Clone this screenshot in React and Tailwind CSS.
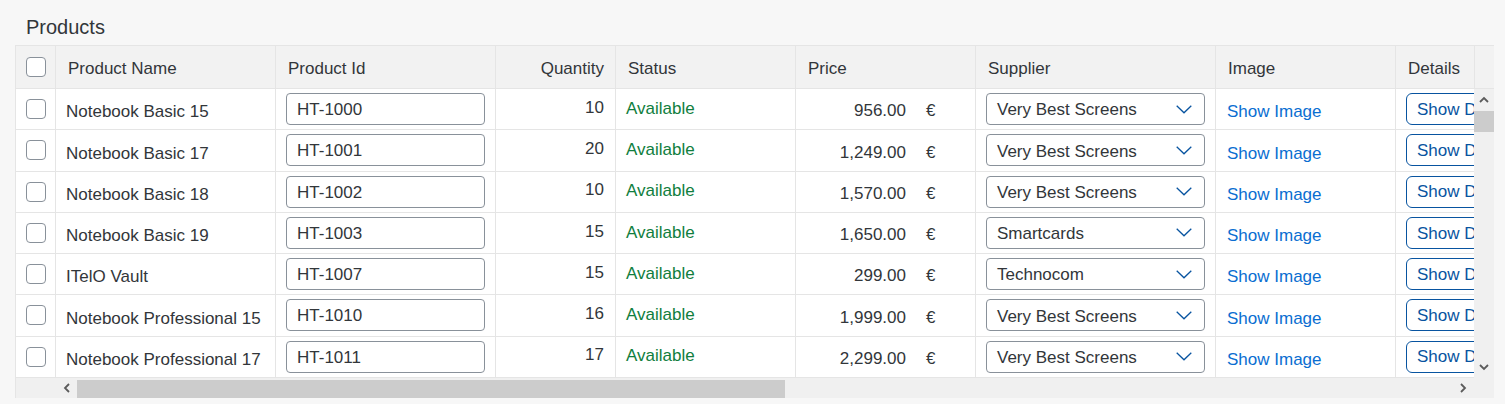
import { useState } from 'react';

const PRODUCTS = [
  { name: 'Notebook Basic 15', id: 'HT-1000', qty: 10, price: '956.00', supplier: 'Very Best Screens' },
  { name: 'Notebook Basic 17', id: 'HT-1001', qty: 20, price: '1,249.00', supplier: 'Very Best Screens' },
  { name: 'Notebook Basic 18', id: 'HT-1002', qty: 10, price: '1,570.00', supplier: 'Very Best Screens' },
  { name: 'Notebook Basic 19', id: 'HT-1003', qty: 15, price: '1,650.00', supplier: 'Smartcards' },
  { name: 'ITelO Vault', id: 'HT-1007', qty: 15, price: '299.00', supplier: 'Technocom' },
  { name: 'Notebook Professional 15', id: 'HT-1010', qty: 16, price: '1,999.00', supplier: 'Very Best Screens' },
  { name: 'Notebook Professional 17', id: 'HT-1011', qty: 17, price: '2,299.00', supplier: 'Very Best Screens' },
];

const cell = 'shrink-0 border-r border-b border-[#e5e5e5] flex items-center';
const head = `${cell} pl-[12px] pt-[4px]`;

function Checkbox({ checked, onChange }) {
  return (
    <button
      onClick={onChange}
      className="w-[20px] h-[20px] border border-[#89919a] rounded-[4px] bg-white flex items-center justify-center"
    >
      {checked && (
        <svg width="12" height="10" viewBox="0 0 12 10">
          <polyline points="1,5 4.5,8.5 11,1" fill="none" stroke="#0854a0" strokeWidth="2" />
        </svg>
      )}
    </button>
  );
}

function Chevron({ dir }) {
  // small scrollbar arrows
  const pts = {
    left: '6,1 2,5 6,9',
    right: '2,1 6,5 2,9',
    up: '1,6 5,2 9,6',
    down: '1,2 5,6 9,2',
  }[dir];
  const horiz = dir === 'left' || dir === 'right';
  return (
    <svg width={horiz ? 8 : 10} height={horiz ? 10 : 8} viewBox={horiz ? '0 0 8 10' : '0 0 10 8'}>
      <polyline points={pts} fill="none" stroke="#5b5b5b" strokeWidth="1.8" />
    </svg>
  );
}

export default function App() {
  const [selected, setSelected] = useState({});
  const toggle = (i) => setSelected((s) => ({ ...s, [i]: !s[i] }));
  const allChecked = PRODUCTS.every((_, i) => selected[i]);

  return (
    <div className="w-[1505px] h-[404px] overflow-hidden bg-[#f7f7f7] text-[#32363a] font-['Liberation_Sans',Arial,sans-serif]">
      {/* Title */}
      <div className="h-[45px] pl-[26px] pt-[15px] text-[20px] leading-[24px]">Products</div>

      <div className="ml-[15px] w-[1479px] border-l border-t border-[#e5e5e5] flex flex-col">
        <div className="flex">
          {/* Table */}
          <div className="w-[1458px] overflow-hidden">
            <div className="w-max text-[17px]">
              {/* Header */}
              <div className="flex h-[43px] bg-[#f2f2f2]">
                <div className={`${cell} w-[40px] justify-center`}>
                  <Checkbox
                    checked={allChecked}
                    onChange={() => setSelected(allChecked ? {} : Object.fromEntries(PRODUCTS.map((_, i) => [i, true])))}
                  />
                </div>
                <div className={`${head} w-[220px]`}>Product Name</div>
                <div className={`${head} w-[220px]`}>Product Id</div>
                <div className={`${cell} w-[120px] justify-end pr-[11px] pt-[4px]`}>Quantity</div>
                <div className={`${head} w-[180px]`}>Status</div>
                <div className={`${head} w-[180px]`}>Price</div>
                <div className={`${head} w-[240px]`}>Supplier</div>
                <div className={`${head} w-[180px]`}>Image</div>
                <div className={`${head} w-[180px]`}>Details</div>
              </div>

              {/* Rows */}
              {PRODUCTS.map((p, i) => (
                <div key={p.id} className="flex h-[41.28px] bg-white">
                  <div className={`${cell} w-[40px] justify-center`}>
                    <Checkbox checked={!!selected[i]} onChange={() => toggle(i)} />
                  </div>
                  <div className={`${cell} w-[220px] pl-[10px] pt-[6px] whitespace-nowrap`}>{p.name}</div>
                  <div className={`${cell} w-[220px] px-[10px]`}>
                    <input
                      readOnly
                      value={p.id}
                      className="h-[32px] w-full border border-[#89919a] rounded-[4px] bg-white pl-[10px] pt-[2px] text-[17px] text-[#32363a] outline-none"
                    />
                  </div>
                  <div className={`${cell} w-[120px] justify-end pr-[11px] pb-[3px]`}>{p.qty}</div>
                  <div className={`${cell} w-[180px] pl-[10px] pb-[1px] text-[#107e3e]`}>Available</div>
                  <div className={`${cell} w-[180px] justify-end pr-[10px] pt-[4px]`}>
                    <span>{p.price}</span>
                    <span className="ml-[20px] w-[39px]">€</span>
                  </div>
                  <div className={`${cell} w-[240px] px-[10px]`}>
                    <div className="h-[32px] w-full border border-[#89919a] rounded-[4px] bg-white pl-[10px] pr-[12px] flex items-center justify-between">
                      <span className="pt-[2px]">{p.supplier}</span>
                      <svg width="16" height="9" viewBox="0 0 16 9">
                        <polyline points="0.7,0.7 8,7.8 15.3,0.7" fill="none" stroke="#0854a0" strokeWidth="1.3" />
                      </svg>
                    </div>
                  </div>
                  <div className={`${cell} w-[180px] pl-[11px] pt-[6px]`}>
                    <a className="text-[#0a6ed1] cursor-pointer">Show Image</a>
                  </div>
                  <div className={`${cell} w-[180px] pl-[10px]`}>
                    <button className="h-[32px] border border-[#0854a0] rounded-[6px] px-[10px] pt-[1px] text-[#0854a0] whitespace-nowrap">
                      Show Details
                    </button>
                  </div>
                </div>
              ))}
            </div>
          </div>

          {/* Vertical scrollbar */}
          <div className="w-[20px] flex flex-col">
            <div className="h-[43px] bg-[#f2f2f2] border-l border-b border-[#e5e5e5]" />
            <div className="h-[289px] bg-[#f0f0f0] flex flex-col">
              <div className="h-[22px] flex items-center justify-center">
                <Chevron dir="up" />
              </div>
              <div className="h-[21px] bg-[#cccccc]" />
              <div className="flex-1" />
              <div className="h-[23px] flex items-center justify-center">
                <Chevron dir="down" />
              </div>
            </div>
          </div>
        </div>

        {/* Horizontal scrollbar */}
        <div className="h-[20px] flex bg-[#f0f0f0]">
          <div className="w-[40px]" />
          <div className="w-[21px] flex items-center justify-center">
            <Chevron dir="left" />
          </div>
          <div className="w-[708px] h-[18px] self-end bg-[#cccccc]" />
          <div className="flex-1" />
          <div className="w-[23px] flex items-center justify-center">
            <Chevron dir="right" />
          </div>
          <div className="w-[20px]" />
        </div>
      </div>
    </div>
  );
}
